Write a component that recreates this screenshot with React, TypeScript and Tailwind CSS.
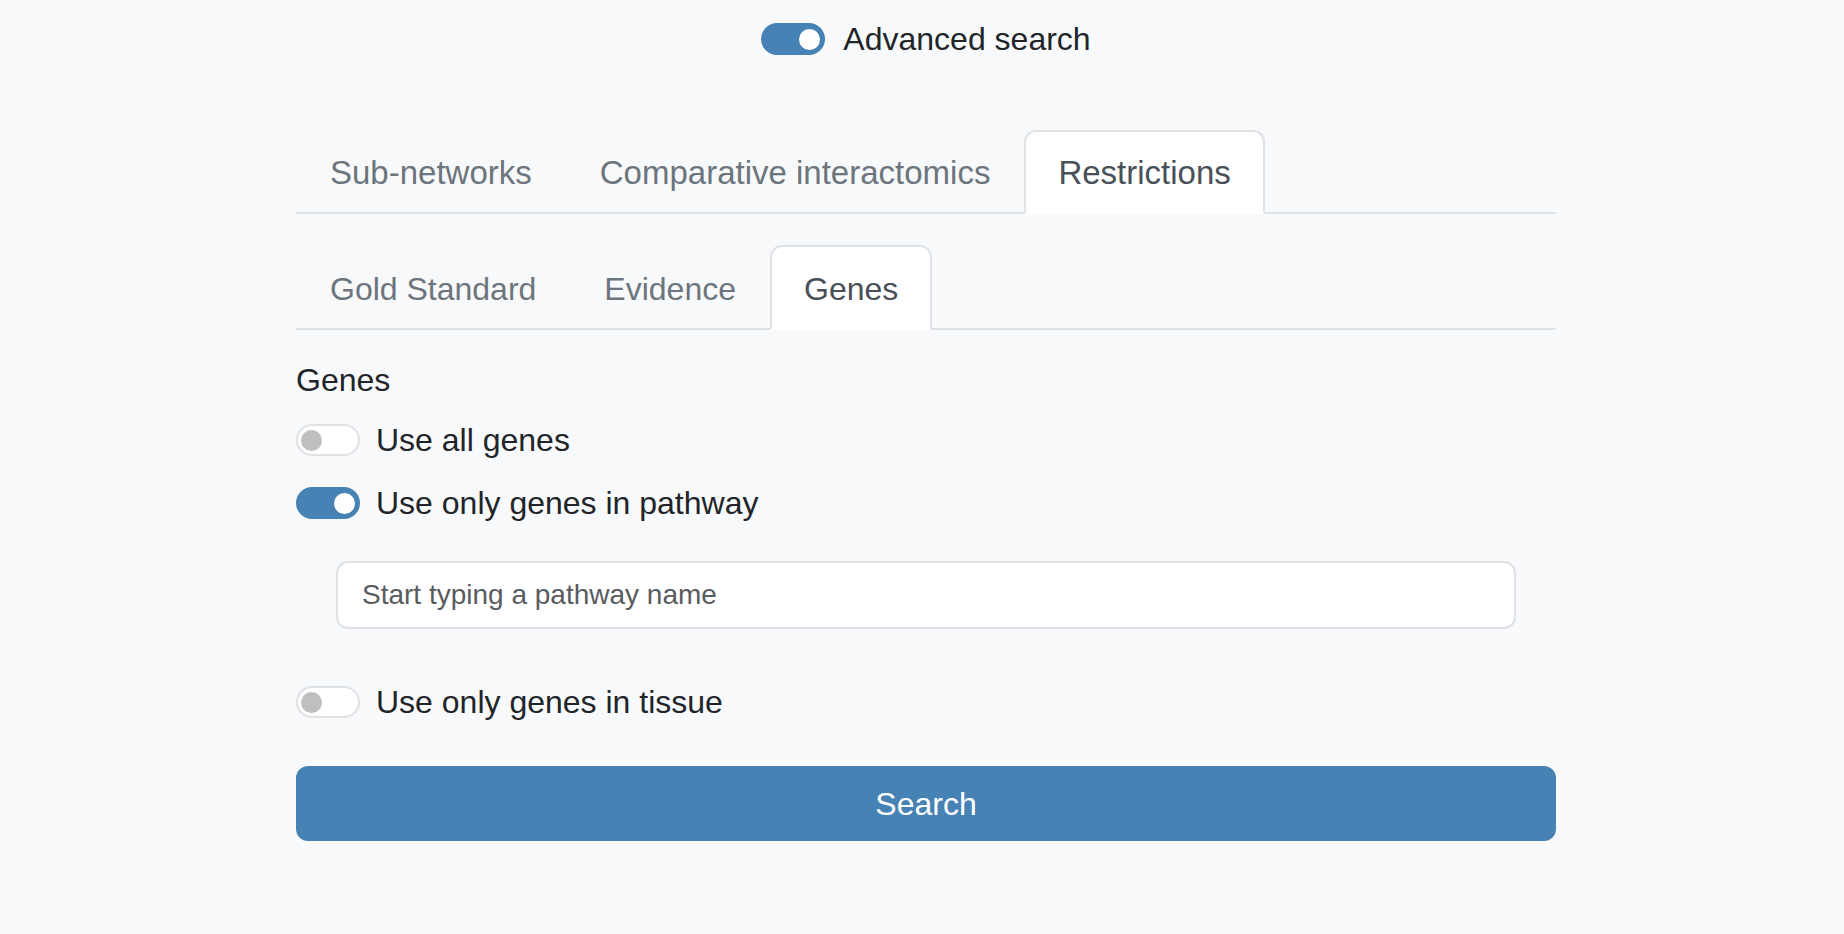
import { useState } from "react";

type SwitchProps = { on: boolean; onToggle?: () => void };

function Switch({ on, onToggle }: SwitchProps) {
  return (
    <button
      type="button"
      onClick={onToggle}
      className={
        on
          ? "flex h-[32px] w-[64px] shrink-0 items-center justify-end rounded-full border-2 border-[#4682b4] bg-[#4682b4] px-[3px]"
          : "flex h-[32px] w-[64px] shrink-0 items-center justify-start rounded-full border-2 border-[#dee2e6] bg-white px-[3px]"
      }
    >
      <span
        className={
          on
            ? "block h-[21px] w-[21px] rounded-full bg-white"
            : "block h-[21px] w-[21px] rounded-full bg-[#bfbfbf]"
        }
      />
    </button>
  );
}

type TabsProps = {
  items: string[];
  active: string;
  onPick: (t: string) => void;
  wide?: boolean;
};

function Tabs({ items, active, onPick, wide }: TabsProps) {
  return (
    <ul className="flex border-b-2 border-[#dee2e6]">
      {items.map((item) => (
        <li key={item} className="-mb-[2px]">
          <button
            type="button"
            onClick={() => onPick(item)}
            className={
              (wide ? "pt-[17px] text-[33px] " : "pt-[18px] text-[32px] ") +
              (item === active
                ? "rounded-t-[12px] border-2 border-[#dee2e6] border-b-white bg-white px-[32px] pb-[15px] leading-[48px] text-[#495057]"
                : "rounded-t-[12px] border-2 border-transparent px-[32px] pb-[15px] leading-[48px] text-[#6c757d]")
            }
          >
            {item}
          </button>
        </li>
      ))}
    </ul>
  );
}

export default function App() {
  const [advanced, setAdvanced] = useState(true);
  const [mainTab, setMainTab] = useState("Restrictions");
  const [subTab, setSubTab] = useState("Genes");
  const [allGenes, setAllGenes] = useState(false);
  const [pathway, setPathway] = useState(true);
  const [tissue, setTissue] = useState(false);

  return (
    <div className="min-h-screen bg-[#f8f9fa] pl-[8px] font-['Liberation_Sans',Arial,sans-serif] text-[#212529]">
      {/* Advanced toggle */}
      <div className="flex items-center justify-center gap-[18px] pt-[15px]">
        <Switch on={advanced} onToggle={() => setAdvanced(!advanced)} />
        <span className="text-[32px] leading-[48px]">Advanced search</span>
      </div>

      <div className="mx-auto mt-[67px] w-[1260px]">
        <Tabs
          items={["Sub-networks", "Comparative interactomics", "Restrictions"]}
          active={mainTab}
          onPick={setMainTab}
          wide
        />

        <div className="mt-[31px]">
          <Tabs
            items={["Gold Standard", "Evidence", "Genes"]}
            active={subTab}
            onPick={setSubTab}
          />
        </div>

        <h5 className="mt-[26px] text-[32px] font-medium leading-[48px]">Genes</h5>

        <div className="mt-[12px] flex items-center gap-[16px]">
          <Switch on={allGenes} onToggle={() => setAllGenes(!allGenes)} />
          <span className="text-[32px] leading-[48px]">Use all genes</span>
        </div>

        <div className="mt-[15px] flex items-center gap-[16px]">
          <Switch on={pathway} onToggle={() => setPathway(!pathway)} />
          <span className="text-[32px] leading-[48px]">Use only genes in pathway</span>
        </div>

        <div className="mx-[40px] mt-[34px]">
          <input
            type="text"
            placeholder="Start typing a pathway name"
            className="block h-[68px] w-full rounded-[12px] border-2 border-[#dee2e6] bg-white px-[24px] text-[28px] leading-[42px] text-[#212529] outline-none placeholder:text-[#595c5f]"
          />
        </div>

        <div className="mt-[49px] flex items-center gap-[16px]">
          <Switch on={tissue} onToggle={() => setTissue(!tissue)} />
          <span className="text-[32px] leading-[48px]">Use only genes in tissue</span>
        </div>

        <button
          type="button"
          className="mt-[40px] block h-[75px] w-full rounded-[12px] border-2 border-[#4682b4] bg-[#4682b4] text-[32px] leading-[48px] text-white"
        >
          Search
        </button>
      </div>
    </div>
  );
}
